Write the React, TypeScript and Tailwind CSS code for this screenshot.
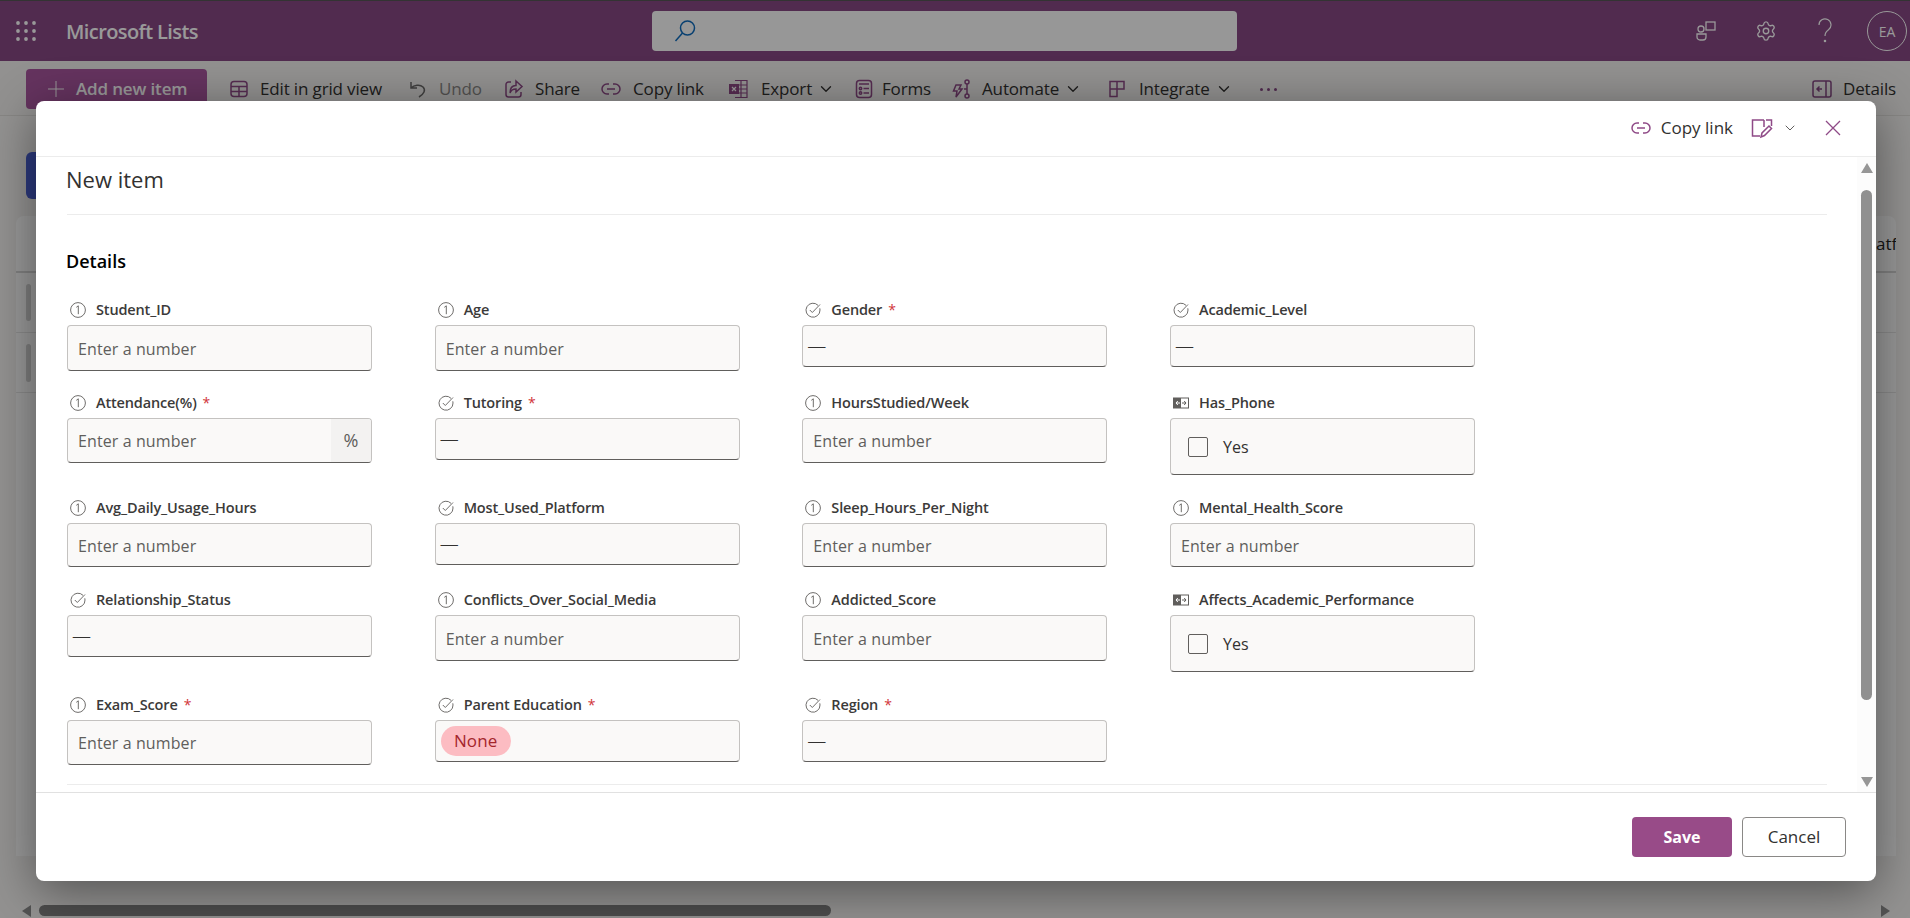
import { ChevronDown, Plus, Settings } from "lucide-react";
import type { ReactNode } from "react";

const PURPLE = "#8f4a87";

function Svg({ size = 20, children, color = PURPLE, width = 1.5 }: { size?: number; children: ReactNode; color?: string; width?: number }) {
  return (
    <svg width={size} height={size} viewBox="0 0 20 20" fill="none" stroke={color} strokeWidth={width} className="shrink-0">
      {children}
    </svg>
  );
}

const LinkIcon = ({ color = PURPLE }: { color?: string }) => (
  <Svg color={color} width={1.5}>
    <path d="M8 5H6a5 5 0 0 0 0 10h2M12 5h2a5 5 0 0 1 0 10h-2M6 10h8" />
  </Svg>
);

const GridIcon = () => (
  <Svg>
    <rect x="2" y="2.5" width="16" height="15" rx="3" />
    <path d="M2 7.5h16M2 12.5h16M10 7.5v10" />
  </Svg>
);

const UndoIcon = () => (
  <Svg color="#6b6a69">
    <path d="M3 3v6h6M3 9c3-3 9-4 12-1 3 3 1 7-4 10" />
  </Svg>
);

const ShareIcon = () => (
  <Svg>
    <path d="M7 3H4.5A2.5 2.5 0 0 0 2 5.5v10A2.5 2.5 0 0 0 4.500 18h10a2.500 2.500 0 0 0 2.500-2.500V13" />
    <path d="M12 2l6 5.500-6 5.500V10c-3 0-5 1-6 4 0-5 2-7.500 6-7.500z" />
  </Svg>
);

const ExcelIcon = () => (
  <Svg width={1.2}>
    <path d="M7 1.500h12v17H7M13 1.500v17M7 6h12M7 10h12M7 14h12" />
    <rect x="1" y="5" width="10" height="10" fill={PURPLE} stroke="none" />
    <path d="M4 8l4 4M8 8l-4 4" stroke="#fff" />
  </Svg>
);

const FormsIcon = () => (
  <Svg>
    <rect x="2.500" y="1.500" width="15" height="17" rx="3" />
    <path d="M5 5h10M9.500 9.500H15M9.500 14H15" />
    <circle cx="6.500" cy="9.500" r="1.200" />
    <circle cx="6.500" cy="14" r="1.200" />
  </Svg>
);

const AutomateIcon = () => (
  <Svg>
    <path d="M5 6h5l-2 4h3l-6 8 1-6H2.500z" />
    <circle cx="16" cy="3" r="2" />
    <circle cx="16" cy="17" r="2" />
    <path d="M16 5v10M13 10h3" />
  </Svg>
);

const IntegrateIcon = () => (
  <Svg>
    <path d="M3 2.500h14v7.500H10v7.500H3zM3 10h7M10 2.500V10" />
  </Svg>
);

const TOOLBAR = [
  { label: "Edit in grid view", icon: <GridIcon />, w: "w-[179px]", ml: "ml-[11px]" },
  { label: "Undo", icon: <UndoIcon />, w: "w-[96px]", ml: "ml-[11px]", muted: true },
  { label: "Share", icon: <ShareIcon />, w: "w-[97px]", ml: "ml-[11px]" },
  { label: "Copy link", icon: <LinkIcon />, w: "w-[127px]", ml: "ml-[12px]" },
  { label: "Export", icon: <ExcelIcon />, w: "w-[126px]", ml: "ml-[13px]", menu: true },
  { label: "Forms", icon: <FormsIcon />, w: "w-[97px]", ml: "ml-[8px]" },
  { label: "Automate", icon: <AutomateIcon />, w: "w-[156px]", ml: "ml-[11px]", menu: true },
  { label: "Integrate", icon: <IntegrateIcon />, w: "w-[151px]", ml: "ml-[12px]", menu: true },
];

type Field = {
  label: string;
  type: "number" | "choice" | "yesno" | "percent" | "pill";
  required?: boolean;
  h?: string;
};

const FIELDS: Field[] = [
  { label: "Student_ID", type: "number", h: "h-[46px]" },
  { label: "Age", type: "number", h: "h-[46px]" },
  { label: "Gender", type: "choice", required: true },
  { label: "Academic_Level", type: "choice" },
  { label: "Attendance(%)", type: "percent", required: true },
  { label: "Tutoring", type: "choice", required: true },
  { label: "HoursStudied/Week", type: "number", h: "h-[45px]" },
  { label: "Has_Phone", type: "yesno" },
  { label: "Avg_Daily_Usage_Hours", type: "number", h: "h-[44px]" },
  { label: "Most_Used_Platform", type: "choice" },
  { label: "Sleep_Hours_Per_Night", type: "number", h: "h-[44px]" },
  { label: "Mental_Health_Score", type: "number", h: "h-[44px]" },
  { label: "Relationship_Status", type: "choice" },
  { label: "Conflicts_Over_Social_Media", type: "number", h: "h-[46px]" },
  { label: "Addicted_Score", type: "number", h: "h-[46px]" },
  { label: "Affects_Academic_Performance", type: "yesno" },
  { label: "Exam_Score", type: "number", required: true, h: "h-[45px]" },
  { label: "Parent Education", type: "pill", required: true },
  { label: "Region", type: "choice", required: true },
];

function FieldIcon({ type }: { type: Field["type"] }) {
  if (type === "yesno") {
    return (
      <svg width="16" height="16" viewBox="0 0 16 16" fill="none" className="shrink-0">
        <rect x="0.500" y="3" width="15" height="10" stroke="#605e5c" />
        <rect x="0.500" y="3" width="7.500" height="10" fill="#605e5c" />
        <path d="M7 8H3M4.800 6L3 8l1.800 2" stroke="#fff" />
        <path d="M9 8h4M11.200 6L13 8l-1.800 2" stroke="#605e5c" />
      </svg>
    );
  }
  if (type === "choice" || type === "pill") {
    return (
      <svg width="16" height="16" viewBox="0 0 16 16" fill="none" stroke="#6f6d6b" strokeWidth="1" className="shrink-0">
        <path d="M13 3.300A7 7 0 1 0 15 8c0-.6-.1-1.200-.2-1.700" />
        <path d="M4.800 8l2.500 2.500L15 2.500" />
      </svg>
    );
  }
  return (
    <svg width="16" height="16" viewBox="0 0 16 16" fill="none" stroke="#6f6d6b" strokeWidth="1" className="shrink-0">
      <circle cx="8" cy="8" r="7.400" />
      <path d="M6.300 5.300L8.300 3.800V12.200" />
    </svg>
  );
}

function Control({ field }: { field: Field }) {
  const box = "w-full rounded-[4px] border border-[#c4c2c0] border-b-[#605e5c] bg-[#faf9f8] text-[16px] tracking-[0.1px]";
  if (field.type === "number") {
    return <div className={`${box} ${field.h} flex items-center pl-[10px] pt-[1px] text-[#605e5c]`}>Enter a number</div>;
  }
  if (field.type === "percent") {
    return (
      <div className={`${box} flex h-[45px] items-center overflow-hidden text-[#605e5c]`}>
        <span className="flex-1 pl-[10px] pt-[1px]">Enter a number</span>
        <span className="flex h-full w-[40px] items-center justify-center bg-[#f3f2f1] text-[18px]">%</span>
      </div>
    );
  }
  if (field.type === "yesno") {
    return (
      <div className={`${box} flex h-[57px] items-center pl-[17px] text-[#323130]`}>
        <span className="h-[20px] w-[20px] rounded-[2px] border border-[#605e5c]" />
        <span className="ml-[15px]">Yes</span>
      </div>
    );
  }
  if (field.type === "pill") {
    return (
      <div className={`${box} flex h-[42px] items-center pl-[5px]`}>
        <span className="flex h-[30px] w-[70px] items-center justify-center rounded-full bg-[#fcbcc2] text-[17px] text-[#a4262c]">None</span>
      </div>
    );
  }
  return <div className={`${box} flex h-[42px] items-center pl-[4px] text-[19px] font-light text-[#323130]`}>—</div>;
}

function FormField({ field }: { field: Field }) {
  return (
    <div>
      <div className="flex h-[24px] items-center pb-[7px] pl-[3px]">
        <FieldIcon type={field.type} />
        <span className="ml-[10px] text-[14.5px] font-semibold tracking-[-0.15px] text-[#3b3a39]">{field.label}</span>
        {field.required && <span className="ml-[6px] text-[14px] text-[#d13438]">*</span>}
      </div>
      <Control field={field} />
    </div>
  );
}

function ModalScrollbar() {
  return (
    <div className="flex w-[19px] flex-col items-center bg-[#fcfcfc] pt-[6px]">
      <span className="h-0 w-0 border-x-[6px] border-b-[10px] border-x-transparent border-b-[#969696]" />
      <span className="mt-[17px] h-[510px] w-[11px] rounded-full bg-[#909090]" />
      <span className="mt-[77px] h-0 w-0 border-x-[6px] border-t-[10px] border-x-transparent border-t-[#969696]" />
    </div>
  );
}

function Modal() {
  return (
    <div className="absolute left-[36px] top-[101px] z-20 flex h-[780px] w-[1840px] flex-col rounded-[8px] bg-white shadow-[0_10px_50px_rgba(0,0,0,0.45)]">
      <div className="flex h-[56px] items-center justify-end border-b border-[#ececec] pb-[2px] pr-[35px]">
        <LinkIcon />
        <span className="ml-[10px] text-[17px] text-[#323130]">Copy link</span>
        <svg width="22" height="22" viewBox="0 0 22 22" fill="none" stroke={PURPLE} strokeWidth="1.500" className="ml-[18px]">
          <path d="M13 3H1.500v16H9M13 3v7M15 3h5.500v6" />
          <path d="M10 20l1-4 7-7 2.500 2.500-7 7z" />
        </svg>
        <ChevronDown size={16} strokeWidth={1.3} className="ml-[9px] text-[#484644]" />
        <svg width="16" height="16" viewBox="0 0 16 16" fill="none" stroke={PURPLE} strokeWidth="1.300" className="ml-[27px]">
          <path d="M1 1l14 14M15 1L1 15" />
        </svg>
      </div>
      <div className="flex min-h-0 flex-1">
        <div className="min-w-0 flex-1 pl-[31px] pr-[30px]">
          <div className="flex h-[58px] items-start border-b border-[#ececec] pt-[6px] text-[22px] font-medium text-[#323130]">
            <span className="-ml-[1px]">New item</span>
          </div>
          <div className="-ml-[1px] mt-[35px] text-[18px] font-semibold leading-[22px] text-black">Details</div>
          <div className="mt-[29px] grid grid-cols-[repeat(4,305px)] grid-rows-[93px_105px_92px_105px_88px] gap-x-[62.67px]">
            {FIELDS.map((field) => (
              <FormField key={field.label} field={field} />
            ))}
          </div>
          <div className="border-b border-[#ececec]" />
        </div>
        <ModalScrollbar />
      </div>
      <div className="flex h-[89px] items-start justify-end gap-[10px] border-t border-[#e1e1e1] pr-[30px] pt-[24px]">
        <button className="h-[40px] w-[100px] rounded-[4px] bg-[#984b88] text-[16px] font-bold text-white">Save</button>
        <button className="h-[40px] w-[104px] rounded-[4px] border border-[#8a8886] text-[17px] text-[#323130]">Cancel</button>
      </div>
    </div>
  );
}

export default function App() {
  return (
    <div className="relative h-[918px] w-[1910px] overflow-hidden bg-[#f5f4f2] font-['Open_Sans',sans-serif]">
      <header className="flex h-[61px] items-center border-t border-[#555] bg-[#874884] text-white">
        <svg width="20" height="20" viewBox="0 0 20 20" fill="#fff" className="ml-[16px]">
          {[2, 10, 18].map((y) => [2, 10, 18].map((x) => <circle key={`${x}-${y}`} cx={x} cy={y} r="1.900" />))}
        </svg>
        <span className="ml-[30px] w-[586px] pt-[2px] text-[20px] font-semibold tracking-[-0.6px]">Microsoft Lists</span>
        <div className="flex h-[40px] w-[585px] items-center rounded-[4px] bg-[#fcfcfc] pl-[22px]">
          <svg width="22" height="24" viewBox="0 0 22 24" fill="none" stroke="#0f6cbd" strokeWidth="1.500">
            <circle cx="13.500" cy="9" r="7" />
            <path d="M8.500 14L1.500 22" />
          </svg>
        </div>
        <svg width="22" height="22" viewBox="0 0 22 22" fill="none" stroke="#fff" strokeWidth="1.300" className="ml-[458px]">
          <rect x="11" y="2" width="9" height="8" />
          <circle cx="6" cy="9" r="3" />
          <path d="M2 14h9v3a3 3 0 0 1-3 3H5a3 3 0 0 1-3-3z" />
        </svg>
        <Settings size={22} strokeWidth={1.5} className="ml-[38px]" />
        <svg width="16" height="26" viewBox="0 0 16 26" fill="none" stroke="#fff" strokeWidth="1.200" className="ml-[40px]">
          <path d="M2 7a6 6 0 1 1 9.500 4.800C9 13.600 8 15 8 18" />
          <circle cx="8" cy="23" r="0.700" fill="#fff" />
        </svg>
        <span className="ml-[34px] flex h-[40px] w-[40px] items-center justify-center rounded-full border border-white text-[14px]">EA</span>
      </header>

      <div className="flex h-[55px] items-start border-b border-[#e1dfdd] bg-[#f3f2f1] pt-[8px] text-[17px] tracking-[-0.15px] text-[#323130]">
        <div className="ml-[26px] flex h-[40px] w-[181px] items-center rounded-[4px] bg-[#a9569f] pl-[17px] font-semibold text-white">
          <Plus size={26} strokeWidth={0.9} />
          <span className="ml-[7px]">Add new item</span>
        </div>
        <div className="ml-[22px] flex h-[40px] items-center">
          {TOOLBAR.map((item) => (
            <div key={item.label} className={`flex items-center ${item.w}`}>
              {item.icon}
              <span className={`${item.ml} ${item.muted ? "text-[#8a8886]" : ""}`}>{item.label}</span>
              {item.menu && <ChevronDown size={18} strokeWidth={1.8} className="ml-[5px]" />}
            </div>
          ))}
          <span className="ml-[2px] flex gap-[4px]">
            <span className="h-[3px] w-[3px] rounded-full bg-[#874884]" />
            <span className="h-[3px] w-[3px] rounded-full bg-[#874884]" />
            <span className="h-[3px] w-[3px] rounded-full bg-[#874884]" />
          </span>
        </div>
        <div className="ml-auto flex h-[40px] items-center gap-[11px] pr-[14px]">
          <svg width="20" height="20" viewBox="0 0 20 20" fill="none" stroke="#874884" strokeWidth="1.500">
            <rect x="1" y="2" width="18" height="16" rx="2" />
            <path d="M14 2v16M10 10H5M7.500 7.500L5 10l2.500 2.500" />
          </svg>
          Details
        </div>
      </div>

      <main className="pl-[26px] pt-[36px]">
        <div className="h-[47px] w-[60px] rounded-[6px] bg-[#4a5fd0]" />
        <section className="-ml-[10px] mt-[17px] h-[640px] w-[1880px] rounded-t-[8px] bg-white">
          <div className="flex h-[57px] items-center justify-end border-b-2 border-[#d8d8d8] text-[17px] text-[#242424]">
            <span className="w-[20px] overflow-hidden whitespace-nowrap">atfo</span>
          </div>
          <div className="flex h-[60px] items-center border-b border-[#e6e6e6] pl-[10px]">
            <span className="h-[37px] w-[5px] rounded-full bg-[#d2d2d2]" />
          </div>
          <div className="flex h-[60px] items-center border-b border-[#e6e6e6] pl-[10px]">
            <span className="h-[38px] w-[5px] rounded-full bg-[#d2d2d2]" />
          </div>
        </section>
      </main>

      {/* page scrollbar, dimmed with the rest of the page */}
      <div className="absolute bottom-[2px] left-[22px] flex h-[11px] w-[1868px] items-center">
        <span className="h-0 w-0 border-y-[6px] border-r-[9px] border-y-transparent border-r-[#8a8a8a]" />
        <span className="ml-[8px] h-[11px] w-[792px] rounded-full bg-[#808080]" />
        <span className="ml-auto h-0 w-0 border-y-[6px] border-l-[9px] border-y-transparent border-l-[#8a8a8a]" />
      </div>

      <div className="absolute inset-0 z-10 bg-black/40" />
      <Modal />
    </div>
  );
}
